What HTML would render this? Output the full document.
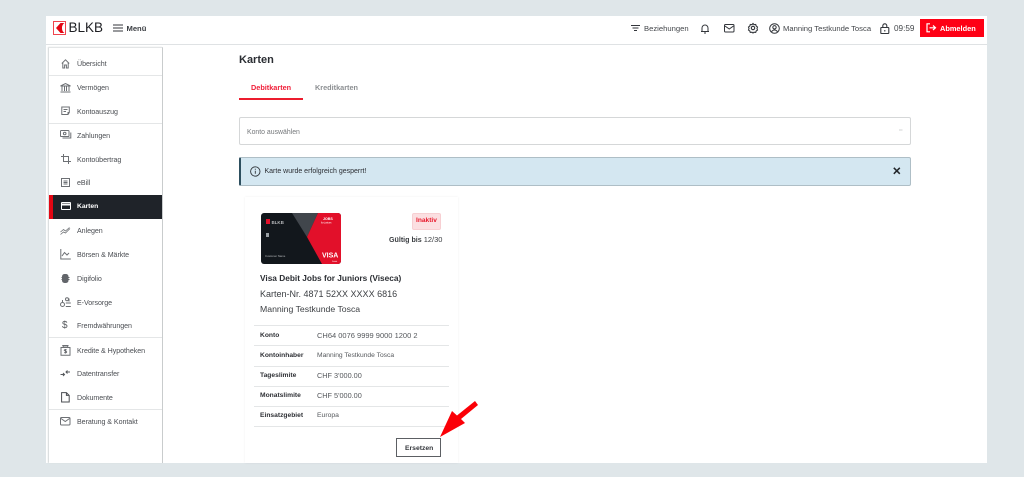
<!DOCTYPE html>
<html lang="de"><head><meta charset="utf-8"><title>Karten</title>
<style>
*{box-sizing:border-box}
html,body{margin:0;padding:0;width:1024px;height:477px;overflow:hidden;background:#dfe6e9;font-family:"Liberation Sans",sans-serif;color:#33363b}
.a{position:absolute;white-space:nowrap}
#page{position:absolute;left:46px;top:16px;width:941px;height:447px;background:#fff}
.hl{position:absolute;left:46px;top:44px;width:941px;height:1px;background:#dfe2e4}
#side{position:absolute;left:49px;top:47px;width:114px;height:416px;background:#fff;border-right:1.5px solid #c9cccd;border-top:1px solid #e3e5e6;box-shadow:-1px 0 1px #d5d8d9}
.it{position:absolute;left:77px;font-size:7.1px;line-height:10px;color:#4a4d52;white-space:nowrap;letter-spacing:-.05px}
.dv{position:absolute;left:49px;width:113px;height:1px;background:#e4e6e7}
svg{position:absolute;overflow:visible}
.ic{fill:none;stroke:#6d7074;stroke-width:1}
.th{position:absolute;font-size:6.7px;line-height:10px;font-weight:bold;color:#2f3136;left:260px;white-space:nowrap}
.td{position:absolute;font-size:7.3px;line-height:10px;color:#55585c;left:317px;white-space:nowrap}
.tl{position:absolute;left:254px;width:195px;height:1px;background:#e4e6e7}
.h{position:absolute;font-size:7.65px;color:#44474b;white-space:nowrap}
</style></head><body>
<div id="page"></div>
<div class="hl"></div>

<!-- logo -->
<div class="a" style="left:53px;top:21px;width:13px;height:14px;border:1px solid #f0454e;background:#fff"></div>
<svg style="left:53px;top:21px" width="13" height="14"><path d="M11.500 2H7.500L3 7l4.500 5h4c-1.500-1-2.500-2.500-2.500-5s1-4 2.500-5z" fill="#e30613"/></svg>
<div class="a" style="left:68.500px;top:20px;font-size:13.500px;line-height:16px;color:#1d1e22">BLKB</div>
<svg class="ic" style="left:113px;top:24px;stroke:#33363b" width="11" height="8"><path d="M0 1h10M0 4h10M0 7h10"/></svg>
<div class="a" style="left:126.500px;top:22.500px;font-size:7.600px;font-weight:bold;line-height:11px;color:#3a3d42">Menü</div>

<!-- header right -->
<svg class="ic" style="left:631px;top:25px;stroke:#33363b" width="10" height="7"><path d="M0 .5h9M1.500 3h6M3 5.500h3"/></svg>
<div class="h" style="left:644px;top:23.500px">Beziehungen</div>
<svg class="ic" style="left:700px;top:23px;stroke:#33363b" width="10" height="11"><path d="M1 8.500h8M2 8.500V5a3 3 0 0 1 6 0v3.500M4 10h2"/></svg>
<svg class="ic" style="left:724px;top:24px;stroke:#33363b" width="11" height="9"><rect x=".5" y=".5" width="9.500" height="7.500" rx="1"/><path d="M1 2l4.250 3L9.500 2"/></svg>
<svg class="ic" style="left:748px;top:23px;stroke:#33363b;stroke-width:1.100" width="10" height="10"><path d="M5 .5l1 1.200 1.700-.2.500 1.600 1.300 1L9 5.500l.5 1.500-1.300 1-.5 1.400-1.700-.2-1 .8-1-.8-1.700.2L1.800 8 .5 7 1 5.500.5 4.100l1.300-1 .5-1.600L4 1.700z"/><circle cx="5" cy="5" r="1.700"/></svg>
<svg class="ic" style="left:769px;top:23px;stroke:#33363b" width="11" height="11"><circle cx="5.500" cy="5.500" r="4.800"/><circle cx="5.500" cy="4.300" r="1.700"/><path d="M2.500 9c.7-1.500 1.700-2 3-2s2.300.5 3 2"/></svg>
<div class="h" style="left:783px;top:23.500px">Manning Testkunde Tosca</div>
<svg class="ic" style="left:880px;top:23px;stroke:#33363b;stroke-width:1.100" width="10" height="11"><rect x=".8" y="4.500" width="8" height="6" rx=".6"/><path d="M2.800 4.500V2.800a2 2 0 0 1 4 0v1.700M4.800 7v1.500"/></svg>
<div class="h" style="left:894px;top:23.500px;font-size:8.200px">09:59</div>
<div class="a" style="left:920px;top:19px;width:64px;height:18px;background:#fe0015"></div>
<svg style="left:926px;top:23px;fill:none;stroke:#fff;stroke-width:1.200" width="11" height="10"><path d="M4 .8H1v8h3M3.500 4.800h6M7 2.500l2.500 2.300L7 7"/></svg>
<div class="a" style="left:940px;top:23.500px;font-size:7.400px;font-weight:bold;color:#fff;line-height:10px">Abmelden</div>

<!-- sidebar -->
<div id="side"></div>
<div class="dv" style="top:75px"></div><div class="dv" style="top:123px"></div><div class="dv" style="top:337px"></div><div class="dv" style="top:409px"></div>
<div class="a" style="left:49px;top:195px;width:113px;height:24px;background:#1f2329"></div>
<div class="a" style="left:49px;top:195px;width:4px;height:24px;background:#e30613"></div>

<div class="it" style="top:58.500px">Übersicht</div>
<div class="it" style="top:83px">Vermögen</div>
<div class="it" style="top:106.500px">Kontoauszug</div>
<div class="it" style="top:130.500px">Zahlungen</div>
<div class="it" style="top:154.500px">Kontoübertrag</div>
<div class="it" style="top:178px">eBill</div>
<div class="it" style="top:201.500px;color:#fff;font-weight:bold;font-size:6.800px">Karten</div>
<div class="it" style="top:226px">Anlegen</div>
<div class="it" style="top:250px">Börsen &amp; Märkte</div>
<div class="it" style="top:274px">Digifolio</div>
<div class="it" style="top:297.500px">E-Vorsorge</div>
<div class="it" style="top:321px">Fremdwährungen</div>
<div class="it" style="top:345.500px">Kredite &amp; Hypotheken</div>
<div class="it" style="top:369px">Datentransfer</div>
<div class="it" style="top:392.500px">Dokumente</div>
<div class="it" style="top:416.500px">Beratung &amp; Kontakt</div>

<svg class="ic" style="left:61px;top:59px" width="10" height="10"><path d="M.8 4.500L4.500.8l3.700 3.700M1.800 3.700V9h1.800V6h1.800v3h1.800V3.700"/></svg>
<svg class="ic" style="left:60px;top:83px" width="11" height="10"><path d="M.5 3L5.500.5 10.500 3zM.5 9h10M2 3.500V8M4.500 3.500V8M6.500 3.500V8M9 3.500V8"/></svg>
<svg class="ic" style="left:61px;top:106px" width="10" height="10"><path d="M7 8.500H.8V1h7.500v5.500zM7 8.500V6.500h1.500M2.500 3.500h4M2.500 5.500h2.500"/></svg>
<svg class="ic" style="left:60px;top:130px" width="12" height="9"><rect x=".5" y=".5" width="8.500" height="6" rx=".8"/><circle cx="4.700" cy="3.500" r="1.300"/><path d="M10.800 2.500v5.500H2.500"/></svg>
<svg class="ic" style="left:61px;top:154px" width="10" height="10"><path d="M2.500 0v7.500H10M0 2.500h7.500V10"/></svg>
<svg class="ic" style="left:61px;top:178px" width="10" height="9"><rect x=".5" y=".5" width="8" height="8"/><path d="M2.500 3h4M2.500 4.500h4M2.500 6h4"/></svg>
<svg style="left:61px;top:202px;fill:none;stroke:#fff;stroke-width:1" width="10" height="8"><rect x=".5" y=".5" width="9" height="7" rx=".5"/><path d="M.5 2.500h9" stroke-width="2"/></svg>
<svg class="ic" style="left:60px;top:226px;stroke-width:.8" width="11" height="9"><path d="M.5 6l3-2.500 2 1.500 4-3.500M.5 8.500l3-2.500 2 1 4.500-4.500"/></svg>
<svg class="ic" style="left:60px;top:249px" width="12" height="11"><path d="M.8 0v10h10M2 7l2.500-3.500L7 6l2-2"/></svg>
<svg style="left:61px;top:273px" width="9" height="11"><rect x="1" y="1" width="6.500" height="9" rx="2.500" fill="#62656a"/><path d="M.5 4.500h8M.5 6.500h8" stroke="#62656a"/></svg>
<svg class="ic" style="left:60px;top:297px" width="12" height="11"><circle cx="2.500" cy="7.500" r="2"/><rect x="5.500" y=".8" width="3" height="3" rx="1.500"/><path d="M5.800 6h5M5.800 9.500h5M9 1.500v3M2.500 5V3"/></svg>
<div class="a" style="left:62px;top:320px;font-size:10px;line-height:11px;color:#55585c">$</div>
<svg class="ic" style="left:60px;top:345px" width="11" height="11"><path d="M3.500 2L2.800.5H8L7.500 2zM1 2.500h9v7.800H1z"/><path d="M5.500 4v4.500M6.700 5c-1-.7-2.500-.5-2.500.3s2.500.7 2.500 1.700-1.500 1-2.500.4"/></svg>
<svg class="ic" style="left:60px;top:369px;stroke:#55585c" width="11" height="8"><path d="M.5 5.500h4M3 4l1.500 1.500L3 7M6 3h4M7.500 1.500L6 3l1.500 1.500"/></svg>
<svg class="ic" style="left:61px;top:392px;stroke:#4a4d52" width="9" height="11"><path d="M.6.600h4.800l2.800 2.800V10H.6zM5.400.600v2.800h2.800"/></svg>
<svg class="ic" style="left:60px;top:417px" width="11" height="9"><rect x=".5" y=".5" width="9.500" height="7.500" rx="1"/><path d="M1 1.500l4.250 3L9.500 1.500"/></svg>

<!-- content -->
<div class="a" style="left:239px;top:52.500px;font-size:11px;line-height:15px;font-weight:bold;color:#2b2e33">Karten</div>
<div class="a" style="left:251px;top:82.500px;font-size:7.300px;line-height:10px;font-weight:bold;color:#f0203a">Debitkarten</div>
<div class="a" style="left:315px;top:82.500px;font-size:7.300px;line-height:10px;font-weight:bold;color:#8c8f92">Kreditkarten</div>
<div class="a" style="left:239px;top:98px;width:64px;height:1.500px;background:#ec1c2e"></div>

<div class="a" style="left:239px;top:117px;width:672px;height:28px;border:1px solid #d5d7d8;border-radius:2px;background:#fff"></div>
<div class="a" style="left:247px;top:128px;font-size:6.900px;line-height:10px;color:#75787b">Konto auswählen</div>
<svg style="left:898px;top:129px" width="6" height="4"><path d="M1 1h3.500" stroke="#d3d5d6" stroke-width="1" fill="none"/></svg>

<div class="a" style="left:239px;top:157px;width:672px;height:29px;background:#d4e7f1;border:1px solid #aebec6;border-left:2px solid #2d4f5f;border-radius:2px"></div>
<svg style="left:249.500px;top:166px;fill:none;stroke:#2e3338;stroke-width:.9" width="11" height="11"><circle cx="5.300" cy="5.500" r="4.700"/><path d="M5.300 4.800v3M5.300 2.800v1"/></svg>
<div class="a" style="left:264.500px;top:167px;font-size:7px;line-height:10px;color:#2b2e33">Karte wurde erfolgreich gesperrt!</div>
<svg style="left:892.500px;top:167px;fill:none;stroke:#22262a;stroke-width:1.500" width="8" height="8"><path d="M.8.800l6 6M6.800.800l-6 6"/></svg>

<!-- card panel -->
<div class="a" style="left:245px;top:197px;width:213px;height:266px;background:#fff;box-shadow:0 0 2px rgba(0,0,0,.07)"></div>
<svg style="left:261px;top:213px" width="80" height="51" viewBox="0 0 80 51">
<defs><clipPath id="c"><rect width="80" height="51" rx="3"/></clipPath></defs>
<g clip-path="url(#c)"><rect width="80" height="51" fill="#12171c"/>
<path d="M31 0H57L46 24z" fill="#41464c"/>
<path d="M57 0H80V51H61L46 24z" fill="#e2102a"/>
<rect x="5" y="6" width="4" height="5" fill="#e2102a"/>
<rect x="5" y="20" width="3" height="4" fill="#9aa0a4"/></g>
<text x="10.500" y="11" font-family="Liberation Sans" font-size="4.800" fill="#e6e7e8">BLKB</text>
<text x="62" y="7" font-family="Liberation Sans" font-size="3.600" font-weight="bold" fill="#fff">JOBS</text>
<text x="60" y="10.500" font-family="Liberation Sans" font-size="2.400" fill="#fff">for juniors</text>
<text x="4" y="44" font-family="Liberation Sans" font-size="2.800" fill="#b5b8ba">Customer Name</text>
<text x="61" y="44.500" font-family="Liberation Sans" font-size="7" font-weight="bold" fill="#fff">VISA</text>
<text x="71" y="49" font-family="Liberation Sans" font-size="2.200" fill="#fff">Debit</text>
</svg>
<div class="a" style="left:412px;top:212.500px;width:29px;height:17px;background:#fbdfe1;border:1px solid #f7cfd2;border-radius:2px"></div>
<div class="a" style="left:416px;top:216px;font-size:6.600px;line-height:10px;font-weight:bold;color:#e8192c">Inaktiv</div>
<div class="a" style="left:389px;top:234.500px;font-size:7.100px;line-height:10px;color:#3a3d41"><b>Gültig bis</b> <span style="font-size:7.500px">12/30</span></div>

<div class="a" style="left:260px;top:272px;font-size:8.300px;line-height:12px;font-weight:bold;color:#2b2e33">Visa Debit Jobs for Juniors (Viseca)</div>
<div class="a" style="left:260px;top:288px;font-size:9px;line-height:12px;color:#3d4044">Karten-Nr. 4871 52XX XXXX 6816</div>
<div class="a" style="left:260px;top:303px;font-size:8.700px;line-height:12px;color:#3d4044">Manning Testkunde Tosca</div>

<div class="tl" style="top:325px"></div><div class="tl" style="top:345px"></div><div class="tl" style="top:366px"></div><div class="tl" style="top:386px"></div><div class="tl" style="top:406px"></div><div class="tl" style="top:426px"></div>
<div class="th" style="top:331px">Konto</div><div class="td" style="top:331px;font-size:7.500px">CH64 0076 9999 9000 1200 2</div>
<div class="th" style="top:351px">Kontoinhaber</div><div class="td" style="top:351px;font-size:6.700px">Manning Testkunde Tosca</div>
<div class="th" style="top:371px">Tageslimite</div><div class="td" style="top:371px">CHF 3'000.00</div>
<div class="th" style="top:391px">Monatslimite</div><div class="td" style="top:391px">CHF 5'000.00</div>
<div class="th" style="top:411px">Einsatzgebiet</div><div class="td" style="top:411px;font-size:6.800px">Europa</div>

<div class="a" style="left:396px;top:438px;width:45px;height:19px;background:#fff;border:1px solid #5c5f63"></div>
<div class="a" style="left:405px;top:443.500px;font-size:6.800px;line-height:10px;font-weight:bold;color:#33363b">Ersetzen</div>

<!-- red arrow -->
<svg style="left:435px;top:398px" width="46" height="42"><path d="M5 39L17 13 22 17.500 40 3 43 7 26 21 30 25z" fill="#fb0007"/></svg>
</body></html>
